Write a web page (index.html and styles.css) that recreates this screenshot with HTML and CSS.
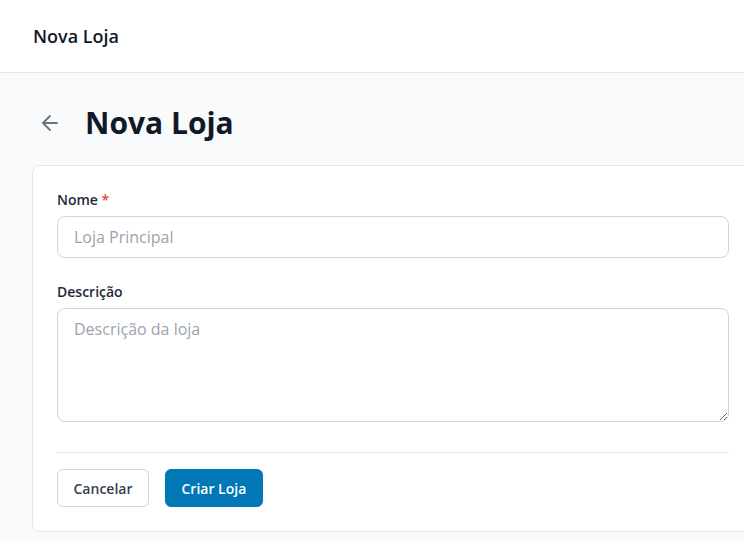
FILE: index.html
```html
<!DOCTYPE html>
<html lang="pt">
<head>
<meta charset="utf-8">
<title>Nova Loja</title>
<link rel="stylesheet" href="styles.css">
</head>
<body>
<header class="topbar">
  <span class="topbar-title">Nova Loja</span>
</header>
<main class="page">
  <div class="page-head">
    <button class="back" aria-label="Voltar">
      <svg width="24" height="24" viewBox="0 0 24 24" fill="none" stroke="currentColor" stroke-width="1.8" stroke-linecap="round" stroke-linejoin="round"><path d="m12 19-7-7 7-7"/><path d="M19 12H5"/></svg>
    </button>
    <h1 class="title">Nova Loja</h1>
  </div>
  <form class="card">
    <div class="field">
      <label class="label" for="nome">Nome <span class="req">*</span></label>
      <input id="nome" class="input" type="text" placeholder="Loja Principal">
    </div>
    <div class="field">
      <label class="label" for="desc">Descrição</label>
      <textarea id="desc" class="input textarea" placeholder="Descrição da loja"></textarea>
    </div>
    <div class="actions">
      <button type="button" class="btn btn-outline">Cancelar</button>
      <button type="button" class="btn btn-primary">Criar Loja</button>
    </div>
  </form>
</main>
</body>
</html>
```
FILE: styles.css
```css
* { box-sizing: border-box; }
html, body { margin: 0; padding: 0; }
body {
  font-family: "Open Sans", "Noto Sans", sans-serif;
  background: #f8fafc;
  color: #111827;
  overflow: hidden;
  width: 744px;
  height: 540px;
}
.topbar {
  height: 73px;
  background: #ffffff;
  border-bottom: 1px solid #e5e7eb;
  display: flex;
  align-items: center;
  padding: 0 33px;
}
.topbar-title {
  font-size: 18px;
  font-weight: 600;
  color: #111827;
}
.page {
  padding: 32px 0 0 32px;
}
.page-head {
  display: flex;
  align-items: center;
  gap: 23px;
  height: 36px;
  margin-bottom: 24px;
}
.back {
  border: none;
  background: none;
  padding: 0;
  margin-left: 6px;
  color: #6b7280;
  display: flex;
  align-items: center;
  cursor: pointer;
}
.title {
  margin: 0;
  font-size: 30px;
  line-height: 36px;
  font-weight: 700;
  color: #111827;
}
.card {
  width: 722px;
  background: #ffffff;
  border: 1px solid #e5e7eb;
  border-radius: 8px;
  padding: 24px;
  display: flex;
  flex-direction: column;
  gap: 24px;
}
.field {
  display: flex;
  flex-direction: column;
  gap: 6px;
}
.label {
  font-size: 14px;
  line-height: 20px;
  font-weight: 600;
  color: #1f2937;
}
.req { color: #ef4444; }
.input {
  width: 100%;
  height: 42px;
  border: 1px solid #d1d5db;
  border-radius: 8px;
  padding: 0 16px;
  font-family: inherit;
  font-size: 16px;
  color: #111827;
  background: #ffffff;
}
.input::placeholder { color: #9ca3af; }
.textarea {
  height: 114px;
  padding: 8px 16px;
  line-height: 24px;
  resize: vertical;
}
.actions {
  margin-top: 6px;
  border-top: 1px solid #e5e7eb;
  padding-top: 16px;
  display: flex;
  gap: 16px;
}
.btn {
  height: 38px;
  border-radius: 6px;
  font-family: inherit;
  font-size: 14px;
  font-weight: 600;
  padding: 0 15.5px;
  cursor: pointer;
}
.btn-outline {
  background: #ffffff;
  border: 1px solid #d1d5db;
  color: #374151;
}
.btn-primary {
  background: #0277b6;
  border: 1px solid #0277b6;
  color: #ffffff;
}
```
